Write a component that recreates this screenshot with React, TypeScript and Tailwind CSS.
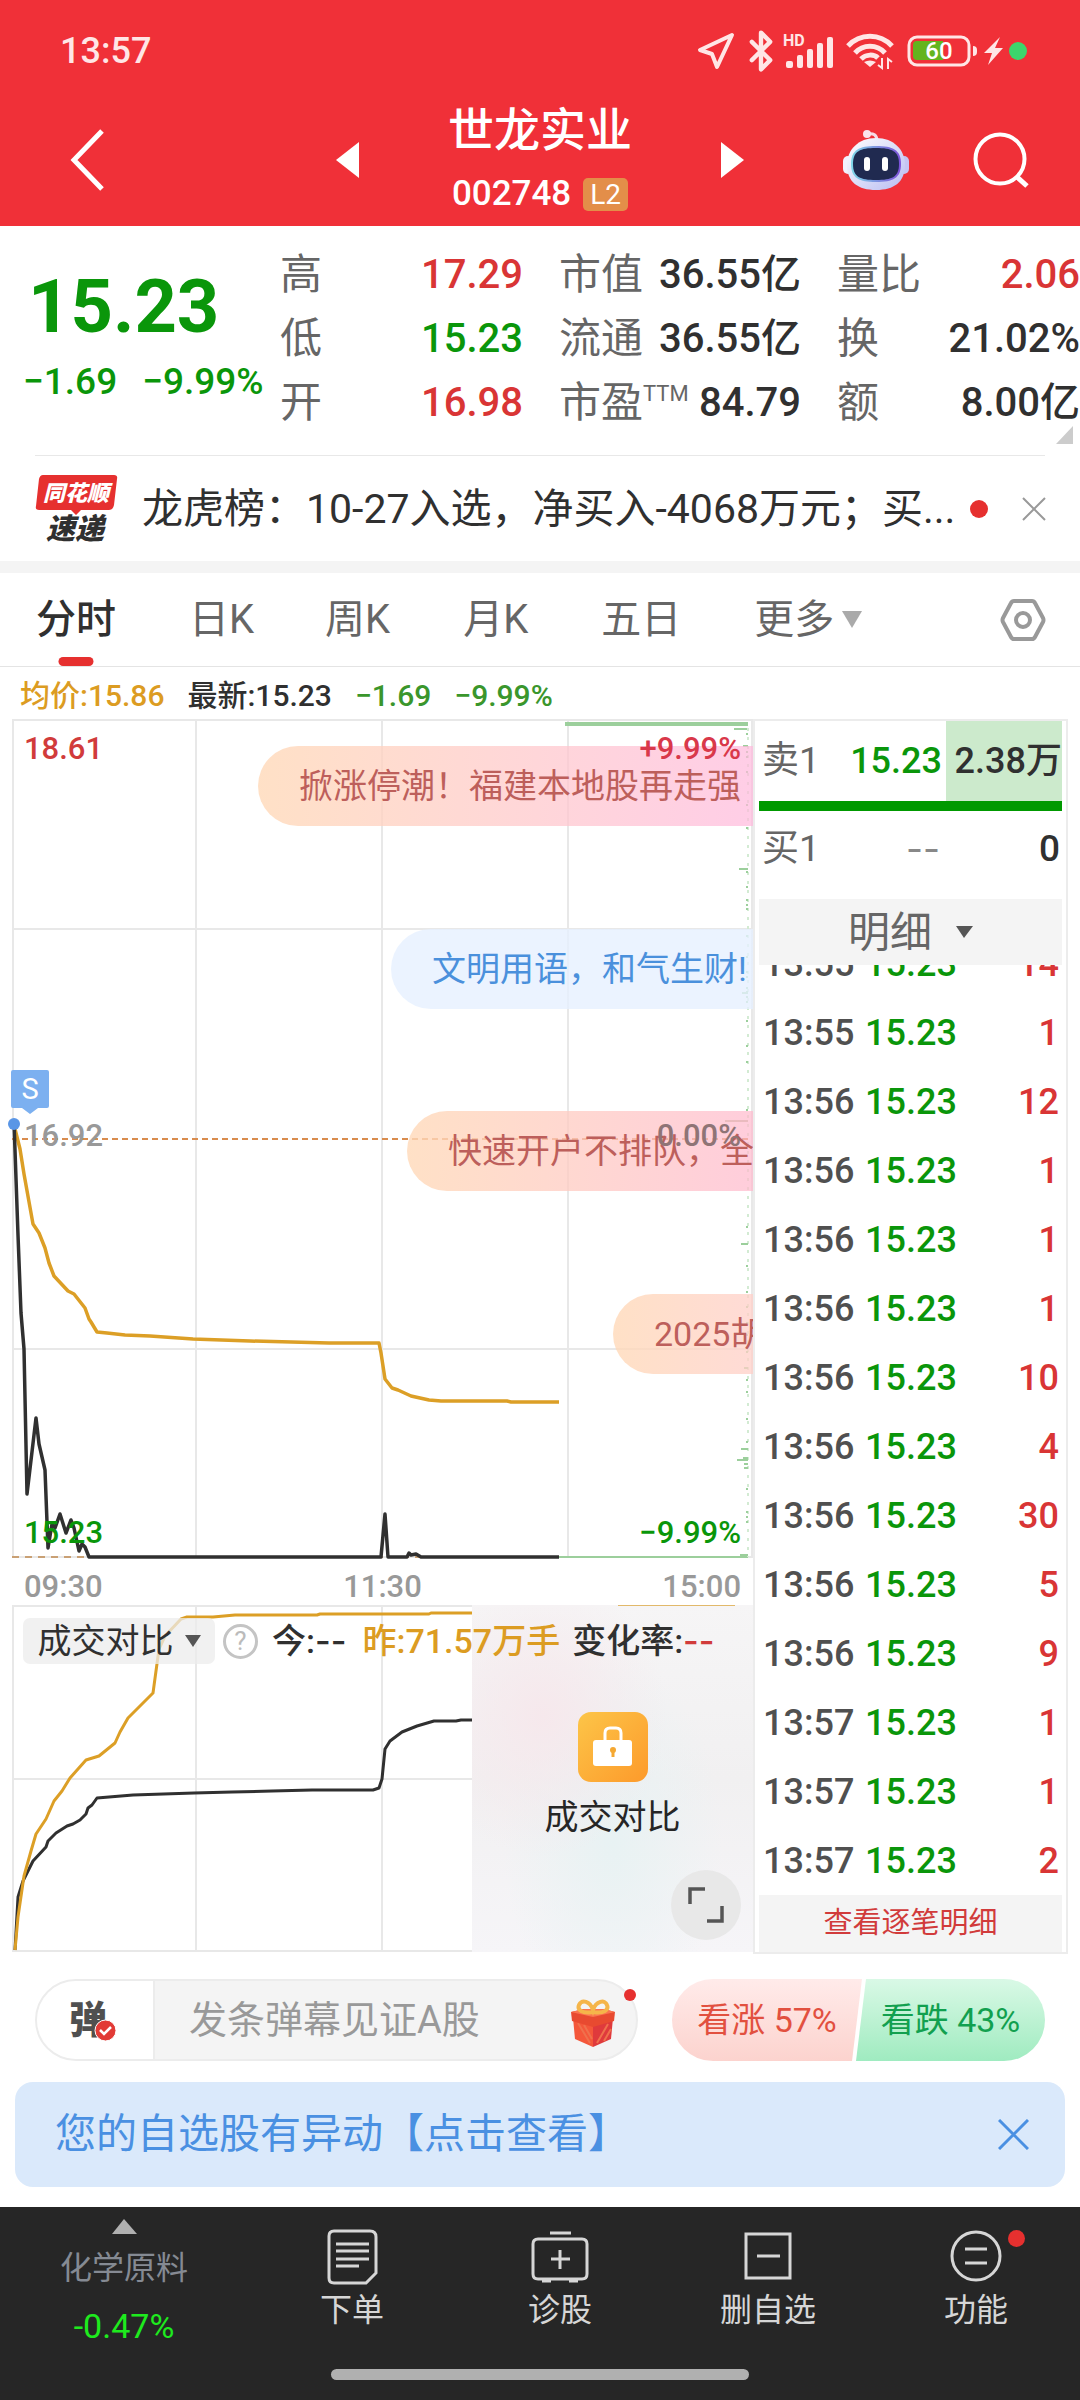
import type { ReactNode } from "react";
import { Bluetooth } from "lucide-react";

interface Trade {
  time: string;
  price: string;
  qty: number;
}

const TRADES: Trade[] = [
  { time: "13:55", price: "15.23", qty: 14 },
  { time: "13:55", price: "15.23", qty: 1 },
  { time: "13:56", price: "15.23", qty: 12 },
  { time: "13:56", price: "15.23", qty: 1 },
  { time: "13:56", price: "15.23", qty: 1 },
  { time: "13:56", price: "15.23", qty: 1 },
  { time: "13:56", price: "15.23", qty: 10 },
  { time: "13:56", price: "15.23", qty: 4 },
  { time: "13:56", price: "15.23", qty: 30 },
  { time: "13:56", price: "15.23", qty: 5 },
  { time: "13:56", price: "15.23", qty: 9 },
  { time: "13:57", price: "15.23", qty: 1 },
  { time: "13:57", price: "15.23", qty: 1 },
  { time: "13:57", price: "15.23", qty: 2 },
];

const RED = "text-[#d93535]";
const GREEN = "text-[#0a960a]";
const DARK = "text-[#303030]";

const QUOTES = [
  [
    { label: "高", value: "17.29", color: RED },
    { label: "低", value: "15.23", color: GREEN },
    { label: "开", value: "16.98", color: RED },
  ],
  [
    { label: "市值", value: "36.55亿", color: DARK },
    { label: "流通", value: "36.55亿", color: DARK },
    { label: "市盈", sup: "TTM", value: "84.79", color: DARK },
  ],
  [
    { label: "量比", value: "2.06", color: RED },
    { label: "换", value: "21.02%", color: DARK },
    { label: "额", value: "8.00亿", color: DARK },
  ],
];

// [y, length] of the bars that grow leftwards from the right edge
const PRICE_BARS = [
  [27, 5], [150, 9], [274, 6], [525, 7], [649, 4], [730, 7],
  [739, 5], [741, 11], [745, 4], [749, 4], [836, 8],
];
const PRICE_DOTS = [
  15, 33, 38, 53, 86, 109, 153, 168, 181, 186, 190, 217, 238, 253, 258, 269, 273,
  278, 283, 302, 327, 343, 391, 508, 547, 573, 588, 604, 616, 633, 661, 673, 700,
  723, 770, 793, 798, 803,
];

const AVG_LINE =
  "3,410 8,430 12,455 21,505 27,514 33,529 37,544 42,557 56,572 62,575 73,589 77,600 79,603 85,613 95,614 113,616 138,617 181,620 238,622 317,624 367,624 369,634 373,660 380,669 386,671 399,677 417,681 429,682 495,682 499,683 547,683";
const PRICE_LINE =
  "2,403 6,516 9,594 12,630 15,775 24,699 27,725 33,751 36,829 40,805 43,809 48,795 54,814 59,801 62,809 67,832 70,825 73,828 77,838 369,838 373,795 376,838 395,838 397,834 399,836 404,835 409,838 547,838";

const VOL_YESTERDAY =
  "3,345 6,312 12,271 19,246 24,229 34,214 42,196 50,186 58,173 66,164 74,155 87,151 103,138 108,127 116,113 141,88 147,44 153,31 169,14 175,12 201,12 212,11 223,10 305,10 308,9 417,9 419,8 460,8";
const VOL_TODAY =
  "3,345 6,292 11,276 21,256 34,242 36,236 44,228 55,221 61,219 68,215 74,209 76,203 80,200 85,193 97,192 121,190 182,188 220,187 260,186 300,185 361,185 367,183 370,174 373,144 378,136 390,127 405,121 422,116 444,116 449,115 460,115";

const BULLETS = [
  { text: "掀涨停潮！福建本地股再走强", pos: "top-[27px] left-[246px]", tone: "from-[#ffd9b8]/80 to-[#ffb8dc]/70 text-[#bd5f5b]" },
  { text: "文明用语，和气生财!", pos: "top-[210px] left-[379px]", tone: "from-[#e6f0ff]/80 to-[#e6f0ff]/80 text-[#4a90dc]" },
  { text: "快速开户不排队，全", pos: "top-[392px] left-[395px]", tone: "from-[#ffd9b8]/80 to-[#ffb8cc]/70 text-[#bd5f5b]" },
  { text: "2025胡", pos: "top-[575px] left-[601px]", tone: "from-[#ffd9b8]/80 to-[#ffcfc8]/75 text-[#bd5f5b]" },
];

export default function App() {
  return (
    <div className="flex w-full flex-col overflow-hidden bg-white font-[Roboto,'Noto_Sans_CJK_SC',sans-serif] text-[#303030]">
      <header className="bg-[#f03038] text-white">
        <StatusBar />
        <TitleBar />
      </header>
      <QuoteSummary />
      <NewsStrip />
      <PeriodTabs />
      <div className="flex h-[52px] items-center gap-[23px] pt-1 pl-5 text-[30px] font-medium">
        <span className="text-[#dc9c22]">均价:15.86</span>
        <span>最新:15.23</span>
        <span className="text-[#3a962c]">−1.69</span>
        <span className="text-[#3a962c]">−9.99%</span>
      </div>
      <main className="flex px-3">
        <div className="min-w-0 flex-1">
          <PriceChart />
          <VolumeChart />
        </div>
        <OrderBook />
      </main>
      <BulletRow />
      <a
        href="#alerts"
        className="mx-[15px] mt-[21px] flex h-[105px] items-center justify-between rounded-[18px] bg-[#dae9fb] pr-[36px] pl-10 text-[41px] text-[#4a90e2]"
      >
        您的自选股有异动【点击查看】
        <svg width="31" height="31" viewBox="0 0 31 31" stroke="#4a90e2" strokeWidth="3">
          <path d="M1 1L30 30M30 1L1 30" />
        </svg>
      </a>
      <BottomNav />
    </div>
  );
}

function StatusBar() {
  return (
    <div className="flex h-[102px] items-center pr-[53px] pl-[60px] text-[#ffe6e6]">
      <span className="flex-1 text-[36px] font-medium">13:57</span>
      <svg width="38" height="38" viewBox="0 0 38 38" fill="none" stroke="currentColor" strokeWidth="4" strokeLinejoin="round">
        <path d="M35 3L3 18L15 22L20 35Z" />
      </svg>
      <Bluetooth className="ml-1 h-[46px] w-[44px]" strokeWidth={2.4} />
      <svg className="overflow-visible" width="52" height="36" viewBox="0 0 52 36" fill="currentColor">
        <text x="0" y="13" fontSize="16" fontWeight="700">HD</text>
        <rect x="3" y="28" width="7" height="7" rx="2" />
        <rect x="14" y="22" width="6" height="13" rx="2" />
        <rect x="24" y="16" width="6" height="19" rx="2" />
        <rect x="34" y="10" width="6" height="25" rx="2" />
        <rect x="44" y="4" width="6" height="31" rx="2" />
      </svg>
      <svg className="ml-[11px]" width="48" height="38" viewBox="0 0 48 38" fill="none" stroke="currentColor" strokeWidth="5">
        <path d="M2 14C14 1 34 1 46 14M9 21C17 12 31 12 39 21M15 27C20 22 28 22 32 26" />
        <path d="M18 30Q24 27 30 30L24 35Z" fill="currentColor" stroke="none" />
        <path d="M36 26V36L32 33M42 37V27L46 30" strokeWidth="2" />
      </svg>
      <svg className="ml-[13px]" width="71" height="32" viewBox="0 0 71 32">
        <rect x="2" y="2" width="60" height="28" rx="8" fill="none" stroke="currentColor" strokeWidth="3" />
        <path d="M10 6H36V25H10Q6 25 6 21V10Q6 6 10 6" fill="#64b41e" />
        <path d="M66 11Q70 11 70 15V17Q70 21 66 21Z" fill="currentColor" />
        <text x="32" y="24" fontSize="24" fontWeight="500" textAnchor="middle" fill="#fff">60</text>
      </svg>
      <svg className="ml-[6px]" width="19" height="30" viewBox="0 0 19 30" fill="currentColor">
        <path d="M16 1L0 17H8L4 29L19 12H11Z" />
      </svg>
      <span className="ml-[6px] size-[18px] rounded-full bg-[#3cd56c]" />
    </div>
  );
}

function TitleBar() {
  return (
    <div className="grid h-[124px] grid-cols-[1fr_auto_1fr]">
      <div className="flex items-center pb-2 pl-[70px]">
        <button aria-label="返回">
          <svg width="34" height="62" viewBox="0 0 34 62" fill="none" stroke="#fff" strokeWidth="5">
            <path d="M32 2L4 31L32 60" />
          </svg>
        </button>
      </div>
      <div className="flex w-[408px] items-start justify-between">
        <button aria-label="上一只" className="mt-10">
          <svg width="23" height="36" viewBox="0 0 23 36" fill="#fff">
            <path d="M23 0V36L0 18Z" />
          </svg>
        </button>
        <div className="flex flex-col items-center">
          <h1 className="text-[46px] leading-[56px] font-medium">世龙实业</h1>
          <div className="mt-2 flex h-[56px] items-center gap-3">
            <span className="text-[35px] font-medium">002748</span>
            <span className="rounded-[5px] bg-[#e38e49] px-[7px] text-[28px] leading-[33px]">L2</span>
          </div>
        </div>
        <button aria-label="下一只" className="mt-10">
          <svg width="23" height="36" viewBox="0 0 23 36" fill="#fff">
            <path d="M0 0V36L23 18Z" />
          </svg>
        </button>
      </div>
      <div className="flex items-center justify-end gap-[64px] pr-[51px] pb-2">
        <button aria-label="智能助手">
          <Robot />
        </button>
        <button aria-label="搜索">
          <svg width="56" height="56" viewBox="0 0 56 56" fill="none" stroke="#fff" strokeWidth="4">
            <circle cx="27" cy="27" r="24.5" />
            <path d="M43 44L54 54" strokeWidth="5" />
          </svg>
        </button>
      </div>
    </div>
  );
}

function Robot() {
  return (
    <svg width="66" height="62" viewBox="0 0 66 62">
      <defs>
        <linearGradient id="helmet" x1="0" y1="0" x2="1" y2="1">
          <stop offset="0" stopColor="#fff" />
          <stop offset="1" stopColor="#b9bdf2" />
        </linearGradient>
        <linearGradient id="visor" x1="0" y1="0" x2="1" y2="0">
          <stop offset="0" stopColor="#7fd8e8" />
          <stop offset="1" stopColor="#7b4fd8" />
        </linearGradient>
      </defs>
      <path d="M24 5Q34 3 34 12" fill="none" stroke="#f6dbe6" strokeWidth="3" />
      <circle cx="24" cy="5" r="4" fill="#fbe3ec" />
      <rect x="0" y="27" width="10" height="18" rx="5" fill="#f2f0fd" />
      <rect x="56" y="27" width="10" height="18" rx="5" fill="#c6c4f3" />
      <path d="M33 9C51 9 62 21 62 36C62 53 51 61 33 61C15 61 4 53 4 36C4 21 15 9 33 9Z" fill="url(#helmet)" />
      <path d="M33 17C50 17 58 21 58 35C58 49 50 53 33 53C16 53 8 49 8 35C8 21 16 17 33 17Z" fill="url(#visor)" />
      <path d="M33 19C49 19 56 22 56 35C56 48 49 51 33 51C17 51 10 48 10 35C10 22 17 19 33 19Z" fill="#202a50" />
      <rect x="21" y="28" width="6" height="14" rx="3" fill="#fff" />
      <rect x="39" y="28" width="6" height="14" rx="3" fill="#fff" />
    </svg>
  );
}

function QuoteSummary() {
  return (
    <section className="relative flex h-[230px] pt-[17px]">
      <div className={`w-[280px] shrink-0 whitespace-nowrap ${GREEN}`}>
        <div className="pt-2 pl-7 text-[74px] leading-[112px] font-bold">15.23</div>
        <div className="flex gap-[25px] pl-[23px] text-[37px] leading-[38px] font-medium">
          <span>−1.69</span>
          <span>−9.99%</span>
        </div>
      </div>
      <div className="grid flex-1 grid-cols-[243px_242px_1fr] gap-x-[36px]">
        {QUOTES.map((column) => (
          <dl key={column[0].label} className="flex flex-col text-[40px] leading-[64px]">
            {column.map((q) => (
              <div key={q.label} className="flex justify-between whitespace-nowrap">
                <dt className="flex text-[42px] text-[#666]">
                  {q.label}
                  {"sup" in q && <span className="text-[22px] leading-[46px]">{q.sup}</span>}
                </dt>
                <dd className={`font-medium ${q.color}`}>{q.value}</dd>
              </div>
            ))}
          </dl>
        ))}
      </div>
      <svg className="absolute right-[7px] bottom-[12px]" width="17" height="18" viewBox="0 0 17 18" fill="#ccc">
        <path d="M17 0V18H0Z" />
      </svg>
      <div className="absolute right-[35px] bottom-0 left-[35px] h-px bg-[#e8e8e8]" />
    </section>
  );
}

function NewsStrip() {
  return (
    <section className="flex h-[117px] items-center border-b-12 border-[#f4f4f4] pr-[34px] pl-[35px]">
      <svg width="83" height="68" viewBox="0 0 83 68" className="shrink-0">
        <path d="M8 0H79Q83 0 82 4L79 30Q78 35 74 35H46L41 40L36 35H4Q0 35 1 31L4 4Q5 0 8 0" fill="#e6302f" />
        <text x="41" y="26" fontSize="22" fontWeight="900" fontStyle="italic" textAnchor="middle" fill="#fff">同花顺</text>
        <text x="40" y="64" fontSize="29" fontWeight="900" fontStyle="italic" textAnchor="middle" fill="#303030">速递</text>
      </svg>
      <a href="#news" className="ml-6 min-w-0 flex-1 text-[41px] leading-[60px] whitespace-nowrap">
        龙虎榜：10-27入选，净买入-4068万元；买...
      </a>
      <span className="ml-2 size-[18px] shrink-0 rounded-full bg-[#e6302f]" />
      <button aria-label="关闭" className="ml-[34px]">
        <svg width="24" height="24" viewBox="0 0 24 24" stroke="#999" strokeWidth="2">
          <path d="M1 1L23 23M23 1L1 23" />
        </svg>
      </button>
    </section>
  );
}

function PeriodTabs() {
  return (
    <nav className="flex h-[94px] items-center border-b border-[#e4e4e4] pr-[34px] pl-9 text-[40px] text-[#666]">
      <button className="relative mr-[73px] flex h-full items-center font-medium text-[#303030]">
        分时
        <span className="absolute bottom-0 left-1/2 h-[9px] w-[35px] -translate-x-1/2 rounded-full bg-[#e6302f]" />
      </button>
      <button className="mr-[71px]">日K</button>
      <button className="mr-[73px]">周K</button>
      <button className="mr-[73px]">月K</button>
      <button className="mr-[73px]">五日</button>
      <button className="flex items-center gap-2">
        更多
        <svg width="20" height="17" viewBox="0 0 20 17" fill="#aaa">
          <path d="M0 0H20L10 17Z" />
        </svg>
      </button>
      <button aria-label="设置" className="ml-auto">
        <svg width="46" height="44" viewBox="0 0 46 44" fill="none" stroke="#999" strokeWidth="4" strokeLinejoin="round">
          <path d="M14 3H32Q34 3 35 5L43 20Q44 22 43 24L35 39Q34 41 32 41H14Q12 41 11 39L3 24Q2 22 3 20L11 5Q12 3 14 3Z" />
          <circle cx="23" cy="22" r="7" />
        </svg>
      </button>
    </nav>
  );
}

function PriceChart() {
  return (
    <div className="relative text-[31px] leading-[36px] font-medium">
      <svg className="block h-[840px] w-full overflow-visible" viewBox="0 0 741 840" preserveAspectRatio="none" fill="none">
        <g stroke="#e8e8e8" strokeWidth="2">
          <rect x="1" y="1" width="739" height="837" />
          <path d="M184 0V838M370 0V838M556 0V838M0 210H740M0 630H740" />
        </g>
        <path d="M0 420H740" stroke="#d98c4e" strokeWidth="2" strokeDasharray="6 4" />
        <path d="M0 838H740" stroke="#c9a074" strokeWidth="2" strokeDasharray="7 6" />
        <g stroke="#9ccf9c" strokeWidth="2">
          <path d="M553 5H736" strokeWidth="4" />
          <path d="M722 10H736M547 838H736" />
          <path d="M713 402H736" stroke="#b9bfa0" />
          <path d="M736 9V838" stroke="#d3ebd3" strokeDasharray="3 6" />
          {PRICE_BARS.map(([y, len]) => (
            <path key={y} d={`M${736 - len} ${y}H736`} />
          ))}
          {PRICE_DOTS.map((y) => (
            <path key={y} d={`M734 ${y}H736`} />
          ))}
        </g>
        <polyline points={AVG_LINE} stroke="#dc9f26" strokeWidth="3.5" strokeLinejoin="round" />
        <polyline points={PRICE_LINE} stroke="#303030" strokeWidth="3.5" strokeLinejoin="round" />
        <circle cx="2" cy="405" r="6" fill="#5a96e6" />
        <path d="M1 351H35Q37 351 37 353V387Q37 389 35 389H26L18 395L10 389H1Q-1 389 -1 387V353Q-1 351 1 351" fill="#7cb0f0" />
        <text x="18" y="380" fontSize="29" fill="#fff" fontWeight="400" textAnchor="middle">S</text>
      </svg>
      <div className="absolute inset-0 overflow-hidden">
        {BULLETS.map((b) => (
          <span
            key={b.text}
            className={`absolute right-0 h-[80px] overflow-hidden rounded-l-full bg-linear-to-r pl-[41px] text-[34px] leading-[80px] font-normal whitespace-nowrap ${b.pos} ${b.tone}`}
          >
            {b.text}
          </span>
        ))}
      </div>
      <span className="absolute top-[12px] left-3 text-[#d13b3b]">18.61</span>
      <span className="absolute top-[12px] right-3 text-[#d9384a]">+9.99%</span>
      <span className="absolute top-[399px] left-3 text-[#999]">16.92</span>
      <span className="absolute top-[399px] right-3 text-[#8f7476]">0.00%</span>
      <span className={`absolute top-[796px] left-3 ${GREEN}`}>15.23</span>
      <span className={`absolute top-[796px] right-3 ${GREEN}`}>−9.99%</span>
      <div className="flex h-[46px] items-end justify-between px-3 text-[#999]">
        <span>09:30</span>
        <span>11:30</span>
        <span>15:00</span>
      </div>
    </div>
  );
}

function VolumeChart() {
  return (
    <div className="relative text-[34px] leading-[46px]">
      <svg className="block h-[347px] w-full" viewBox="0 0 741 347" preserveAspectRatio="none" fill="none">
        <g stroke="#e8e8e8" strokeWidth="2">
          <rect x="1" y="1" width="739" height="345" />
          <path d="M184 0V346M370 0V346M0 174H740" />
        </g>
        <polyline points={VOL_TODAY} stroke="#303030" strokeWidth="3" strokeLinejoin="round" />
        <polyline points={VOL_YESTERDAY} stroke="#dc9f26" strokeWidth="3" strokeLinejoin="round" />
      </svg>
      <div className="absolute inset-y-0 right-0 flex w-[281px] flex-col items-center bg-linear-to-b from-[#f6f5f6] via-[#f1f0f1] to-[#f6f5f8]">
        <div className="absolute inset-0 bg-[radial-gradient(ellipse_at_25%_32%,#f6e8ec_0,transparent_42%),radial-gradient(ellipse_at_50%_68%,#e8f2f3_0,transparent_55%)]" />
        <div className="absolute top-0 right-[18px] h-px w-[117px] bg-[#e2b96a]" />
        <svg className="relative mt-[107px]" width="70" height="70" viewBox="0 0 70 70">
          <defs>
            <linearGradient id="lock" x1="0" y1="0" x2="1" y2="1">
              <stop offset="0" stopColor="#fcc548" />
              <stop offset="1" stopColor="#fd9a2b" />
            </linearGradient>
          </defs>
          <rect width="70" height="70" rx="13" fill="url(#lock)" />
          <path d="M27 30V21Q27 16 32 16H38Q43 16 43 21V30" fill="none" stroke="#fff" strokeWidth="3" />
          <rect x="15" y="28" width="39" height="26" rx="3" fill="#fff" />
          <circle cx="35" cy="38" r="3" fill="#f5a832" />
          <path d="M35 38V45" stroke="#f5a832" strokeWidth="3" />
        </svg>
        <span className="relative mt-3 text-[#262626]">成交对比</span>
        <button aria-label="全屏" className="absolute right-3 bottom-3 flex size-[70px] items-center justify-center rounded-full bg-[#e8e8e8]">
          <svg width="38" height="38" viewBox="0 0 38 38" fill="none" stroke="#555" strokeWidth="3.5">
            <path d="M3 18V3H18M35 20V35H20" />
          </svg>
        </button>
      </div>
      <div className="absolute top-[13px] left-[11px] flex items-center font-medium whitespace-nowrap">
        <button className="flex w-[192px] items-center justify-center gap-[11px] rounded-[7px] bg-[#ececec]/75 font-normal">
          成交对比
          <svg width="16" height="12" viewBox="0 0 16 12" fill="#555">
            <path d="M0 0H16L8 12Z" />
          </svg>
        </button>
        <button aria-label="说明" className="ml-2 flex size-[35px] items-center justify-center rounded-full border-3 border-[#c4c4c4] text-[26px] font-normal text-[#bbb]">
          ?
        </button>
        <span className="ml-[14px]">今:<Dashes /></span>
        <span className="ml-4 text-[#dc9c22]">昨:71.57万手</span>
        <span className="ml-3">
          变化率:<span className="text-[#d13b3b]"><Dashes /></span>
        </span>
      </div>
    </div>
  );
}

function Dashes() {
  return <span className="font-[Inter]">--</span>;
}

function OrderBook() {
  return (
    <aside className="flex w-[315px] shrink-0 flex-col border-2 border-[#ececec] px-[4px] text-[37px]">
      <div className="flex h-[80px] items-center">
        <span className="flex-1 pl-[3px] text-[#666]">卖1</span>
        <span className={`pr-1 text-[36px] font-medium ${GREEN}`}>15.23</span>
        <span className="flex h-full w-[116px] items-center justify-end bg-[#cceacc] text-[36px] font-medium">2.38万</span>
      </div>
      <div className="h-[10px] bg-[#009900]" />
      <div className="flex h-[88px] items-center pb-3">
        <span className="flex-1 pl-[3px] text-[#666]">买1</span>
        <span className="text-[#888]"><Dashes /></span>
        <span className="w-[122px] pr-[2px] text-right font-medium">0</span>
      </div>
      <button className="flex h-[66px] items-center justify-center gap-[24px] bg-[#f4f4f4] text-[42px] text-[#666]">
        明细
        <svg width="17" height="12" viewBox="0 0 17 12" fill="#555">
          <path d="M0 0H17L8 12Z" />
        </svg>
      </button>
      <div className="flex h-[930px] flex-col justify-end overflow-hidden">
        <table className="w-full shrink-0 text-[36px] font-medium">
          <tbody>
            {TRADES.map((t, i) => (
              <tr key={i} className="h-[69px]">
                <td className="w-[106px] p-0 pl-1 text-[#505050]">{t.time}</td>
                <td className={`p-0 ${GREEN}`}>{t.price}</td>
                <td className={`p-0 pr-[3px] text-right ${RED}`}>{t.qty}</td>
              </tr>
            ))}
          </tbody>
        </table>
      </div>
      <a href="#ticks" className="flex h-[57px] items-center justify-center bg-[#f4f4f4] text-[29px] text-[#d13b3b]">
        查看逐笔明细
      </a>
    </aside>
  );
}

function BulletRow() {
  return (
    <div className="mt-[25px] flex h-[82px] px-[35px]">
      <div className="relative mr-[34px] flex min-w-0 flex-1 rounded-full border-2 border-[#ececec] bg-[#f4f4f4]">
        <button
          aria-label="弹幕开关"
          className="relative flex w-[118px] shrink-0 items-center rounded-l-full border-r-2 border-[#ececec] bg-white pl-[32px] text-[38px] font-black text-[#505050]"
        >
          弹
          <svg className="absolute top-[38px] left-[57px]" width="23" height="23" viewBox="0 0 23 23">
            <circle cx="11.5" cy="11.5" r="10.5" fill="#e23b36" stroke="#fff" />
            <path d="M6 11L10 15L17 8" fill="none" stroke="#fff" strokeWidth="2.5" />
          </svg>
        </button>
        <input
          aria-label="发条弹幕"
          placeholder="发条弹幕见证A股"
          className="min-w-0 flex-1 bg-transparent pl-[34px] text-[38px] outline-none placeholder:text-[#999]"
        />
        <button aria-label="礼物" className="mr-[20px]">
          <Gift />
        </button>
        <span className="absolute top-[8px] right-0 size-[12px] rounded-full bg-[#e6302f]" />
      </div>
      <div className="flex w-[373px] shrink-0 text-[34px] whitespace-nowrap">
        <button className="w-[190px] shrink-0 rounded-l-full bg-linear-to-b from-[#ffebea] to-[#fcd3ce] text-[#e2503f] [clip-path:polygon(0_0,100%_0,180px_100%,0_100%)]">
          看涨 57%
        </button>
        <button className="-ml-[6px] flex-1 rounded-r-full bg-linear-to-b from-[#d9f9e6] to-[#9febc0] text-[#12a04f] [clip-path:polygon(10px_0,100%_0,100%_100%,0_100%)]">
          看跌 43%
        </button>
      </div>
    </div>
  );
}

function Gift() {
  return (
    <svg width="46" height="50" viewBox="0 0 46 50" className="mt-2">
      <path d="M3 19L23 26V48L5 40Z" fill="#f4573a" />
      <path d="M43 19L23 26V48L41 40Z" fill="#df3a3c" />
      <path d="M8 24L20 44M14 26L22 40M38 25L27 44M41 30L34 42" stroke="#f0704c" strokeWidth="2" />
      <path d="M1 13L14 10H34L45 13L44 22L23 28L2 22Z" fill="#e84a30" />
      <path d="M1 13L14 10H34L45 13L23 18Z" fill="#fa7450" />
      <path d="M23 13C12 15 7 11 9 6C12 0 20 2 23 11C26 2 35 0 37 6C39 11 34 15 23 13Z" fill="none" stroke="#f5b54a" strokeWidth="4" />
    </svg>
  );
}

function BottomNav() {
  return (
    <footer className="mt-5 bg-[#262626] text-[32px] text-[#d6d6d6]">
      <nav className="grid h-[162px] grid-cols-[248fr_208fr_208fr_208fr_208fr]">
        <a href="#sector" className="flex flex-col items-center pt-3 text-[#858a93]">
          <svg width="25" height="15" viewBox="0 0 25 15" fill="#b0b0b0">
            <path d="M12 0L25 15H0Z" />
          </svg>
          <span className="mt-[10px] leading-[48px]">化学原料</span>
          <span className="mt-[11px] text-[34px] leading-[46px] text-[#1eea1e]">-0.47%</span>
        </a>
        <NavItem label="下单">
          <path d="M8 3H44Q50 3 50 9V45L40 55H8Q3 55 3 50V8Q3 3 8 3Z" />
          <path d="M10 16H43M10 23H43M10 31H43M10 38H33" />
        </NavItem>
        <NavItem label="诊股">
          <path d="M6 11H48Q53 11 53 16V46Q53 51 48 51H4Q-1 51 -1 46V16Q-1 11 4 11Z" />
          <path d="M16 5H37M26 22V41M17 31H36M8 53H17M35 53H44" />
        </NavItem>
        <NavItem label="删自选">
          <path d="M4 6H48V50H4ZM15 28H38" />
        </NavItem>
        <NavItem label="功能" dot>
          <circle cx="26" cy="28" r="24" />
          <path d="M15 21H37M15 35H37" />
        </NavItem>
      </nav>
      <div className="flex h-[31px]">
        <span className="mx-auto h-[11px] w-[418px] rounded-full bg-[#b0b0b0]" />
      </div>
    </footer>
  );
}

function NavItem({ label, dot, children }: { label: string; dot?: boolean; children: ReactNode }) {
  return (
    <a href="#menu" className="relative flex flex-col items-center pt-[21px]">
      <svg width="58" height="58" viewBox="-3 0 58 58" fill="none" stroke="#d6d6d6" strokeWidth="3">
        {children}
      </svg>
      <span className="leading-[48px]">{label}</span>
      {dot && <span className="absolute top-[23px] right-[55px] size-[17px] rounded-full bg-[#e6302f]" />}
    </a>
  );
}
